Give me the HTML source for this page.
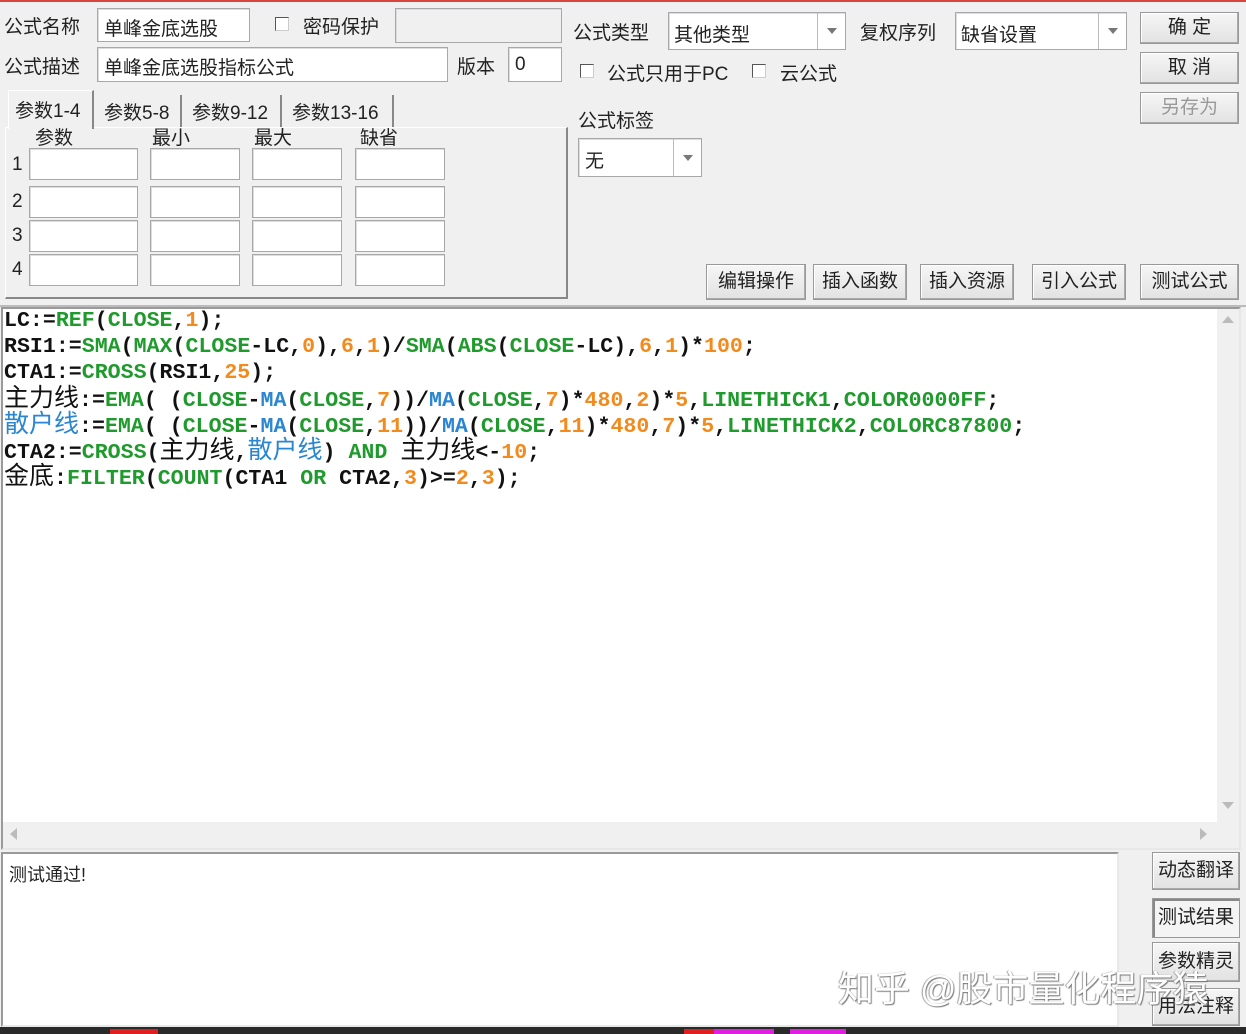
<!DOCTYPE html>
<html><head><meta charset="utf-8"><style>
*{box-sizing:border-box;margin:0;padding:0}
body{width:1246px;height:1034px;background:#f0f0f0;position:relative;overflow:hidden;font-family:"Liberation Sans","Noto Sans CJK SC",sans-serif;font-size:19px;color:#222}
.a{position:absolute;white-space:nowrap}
.in{position:absolute;background:#fff;border:1px solid #a8a8a8;box-shadow:inset 1px 1px 0 #ddd}
.cb{position:absolute;width:14px;height:14px;border:1px solid #555;background:#fff;border-right-color:#ccc;border-bottom-color:#ccc}
.btn{position:absolute;border:1px solid #999;background:linear-gradient(#f6f6f6,#e2e2e2);box-shadow:inset -1px -1px 0 #aaa,inset 1px 1px 0 #fff;text-align:center;font-size:19px;color:#222}
.arr{position:absolute;top:0;bottom:0;border-left:1px solid #bbb;width:28px;right:0}
.arr:after{content:"";position:absolute;left:9px;top:50%;margin-top:-3px;border:5px solid transparent;border-top:6px solid #777}
.code{position:absolute;left:4px;top:308px;font-family:"Liberation Mono",monospace;font-weight:bold;font-size:21.6px;color:#111;white-space:pre}
.code div{height:26px;line-height:26px;overflow:visible}
.g{color:#1f9a2c}.o{color:#f38a1c}.b{color:#2a86d0}
.cj{font-family:"Noto Sans CJK SC",sans-serif;font-weight:normal;font-size:25px;line-height:20px}
</style></head><body>
<div class="a" style="left:0;top:0;width:1246px;height:2px;background:#d9443c"></div>

<div class="a" style="left:4px;top:12px">公式名称</div>
<div class="in" style="left:97px;top:8px;width:153px;height:34px"><span class="a" style="left:6px;top:5px">单峰金底选股</span></div>
<div class="cb" style="left:275px;top:17px"></div>
<div class="a" style="left:303px;top:12px">密码保护</div>
<div class="in" style="left:395px;top:8px;width:167px;height:35px;background:#f0f0f0"></div>

<div class="a" style="left:4px;top:52px">公式描述</div>
<div class="in" style="left:97px;top:47px;width:351px;height:35px"><span class="a" style="left:6px;top:5px">单峰金底选股指标公式</span></div>
<div class="a" style="left:457px;top:52px">版本</div>
<div class="in" style="left:508px;top:47px;width:54px;height:35px"><span class="a" style="left:6px;top:6px">0</span></div>

<!-- tabs -->
<div class="a" style="left:5px;top:127px;width:563px;height:172px;border:1px solid #fff;border-right:2px solid #888;border-bottom:2px solid #888"></div>
<div class="a" style="left:8px;top:90px;width:86px;height:39px;background:#f0f0f0;border-right:2px solid #888;border-top:1px solid #fff;border-left:1px solid #fff"><span class="a" style="left:6px;top:5px">参数1-4</span></div>
<div class="a" style="left:96px;top:95px;width:86px;height:32px;border-right:2px solid #888"><span class="a" style="left:8px;top:3px">参数5-8</span></div>
<div class="a" style="left:184px;top:95px;width:98px;height:32px;border-right:2px solid #888"><span class="a" style="left:8px;top:3px">参数9-12</span></div>
<div class="a" style="left:284px;top:95px;width:110px;height:32px;border-right:2px solid #888"><span class="a" style="left:8px;top:3px">参数13-16</span></div>
<div class="a" style="left:35px;top:123px">参数</div>
<div class="a" style="left:152px;top:123px">最小</div>
<div class="a" style="left:254px;top:123px">最大</div>
<div class="a" style="left:360px;top:123px">缺省</div>
<div class="a" style="left:12px;top:154px">1</div><div class="a" style="left:12px;top:191px">2</div><div class="a" style="left:12px;top:225px">3</div><div class="a" style="left:12px;top:259px">4</div>
<div class="in" style="left:29px;top:148px;width:109px;height:32px"></div><div class="in" style="left:150px;top:148px;width:90px;height:32px"></div><div class="in" style="left:252px;top:148px;width:90px;height:32px"></div><div class="in" style="left:355px;top:148px;width:90px;height:32px"></div>
<div class="in" style="left:29px;top:186px;width:109px;height:32px"></div><div class="in" style="left:150px;top:186px;width:90px;height:32px"></div><div class="in" style="left:252px;top:186px;width:90px;height:32px"></div><div class="in" style="left:355px;top:186px;width:90px;height:32px"></div>
<div class="in" style="left:29px;top:220px;width:109px;height:32px"></div><div class="in" style="left:150px;top:220px;width:90px;height:32px"></div><div class="in" style="left:252px;top:220px;width:90px;height:32px"></div><div class="in" style="left:355px;top:220px;width:90px;height:32px"></div>
<div class="in" style="left:29px;top:254px;width:109px;height:32px"></div><div class="in" style="left:150px;top:254px;width:90px;height:32px"></div><div class="in" style="left:252px;top:254px;width:90px;height:32px"></div><div class="in" style="left:355px;top:254px;width:90px;height:32px"></div>

<!-- right -->
<div class="a" style="left:573px;top:18px">公式类型</div>
<div class="in" style="left:668px;top:12px;width:178px;height:38px"><span class="a" style="left:5px;top:7px">其他类型</span><div class="arr"></div></div>
<div class="a" style="left:860px;top:18px">复权序列</div>
<div class="in" style="left:955px;top:12px;width:172px;height:38px"><span class="a" style="left:5px;top:7px">缺省设置</span><div class="arr"></div></div>
<div class="btn" style="left:1140px;top:12px;width:99px;height:32px;line-height:30px">确 定</div>
<div class="btn" style="left:1140px;top:52px;width:99px;height:32px;line-height:30px">取 消</div>
<div class="btn" style="left:1140px;top:92px;width:99px;height:32px;line-height:30px;color:#999">另存为</div>
<div class="cb" style="left:580px;top:64px"></div>
<div class="a" style="left:607px;top:59px">公式只用于PC</div>
<div class="cb" style="left:752px;top:64px"></div>
<div class="a" style="left:780px;top:59px">云公式</div>
<div class="a" style="left:578px;top:106px">公式标签</div>
<div class="in" style="left:578px;top:138px;width:124px;height:39px"><span class="a" style="left:6px;top:7px">无</span><div class="arr"></div></div>

<div class="btn" style="left:706px;top:264px;width:100px;height:36px;line-height:34px">编辑操作</div>
<div class="btn" style="left:813px;top:264px;width:94px;height:36px;line-height:34px">插入函数</div>
<div class="btn" style="left:920px;top:264px;width:94px;height:36px;line-height:34px">插入资源</div>
<div class="btn" style="left:1032px;top:264px;width:94px;height:36px;line-height:34px">引入公式</div>
<div class="btn" style="left:1140px;top:264px;width:99px;height:36px;line-height:34px">测试公式</div>

<!-- editor -->
<div class="a" style="left:0;top:305px;width:1246px;height:2px;background:#bbb"></div>
<div class="a" style="left:1px;top:307px;width:1240px;height:543px;background:#fff;border:2px solid #9a9a9a;border-right-color:#e8e8e8;border-bottom-color:#e8e8e8"></div>
<div class="a" style="left:1217px;top:309px;width:22px;height:513px;background:#f0f0f0"></div>
<div class="a" style="left:1222px;top:316px;border:6px solid transparent;border-bottom:7px solid #bbb;border-top:0"></div>
<div class="a" style="left:1222px;top:802px;border:6px solid transparent;border-top:7px solid #bbb;border-bottom:0"></div>
<div class="a" style="left:3px;top:822px;width:1236px;height:26px;background:#f0f0f0"></div>
<div class="a" style="left:10px;top:828px;border:6px solid transparent;border-right:7px solid #bbb;border-left:0"></div>
<div class="a" style="left:1200px;top:828px;border:6px solid transparent;border-left:7px solid #bbb;border-right:0"></div>
<div class="code"><div>LC:=<span class="g">REF</span>(<span class="g">CLOSE</span>,<span class="o">1</span>);</div><div>RSI1:=<span class="g">SMA</span>(<span class="g">MAX</span>(<span class="g">CLOSE</span>-LC,<span class="o">0</span>),<span class="o">6</span>,<span class="o">1</span>)/<span class="g">SMA</span>(<span class="g">ABS</span>(<span class="g">CLOSE</span>-LC),<span class="o">6</span>,<span class="o">1</span>)*<span class="o">100</span>;</div><div>CTA1:=<span class="g">CROSS</span>(RSI1,<span class="o">25</span>);</div><div><span class="cj">主力线</span>:=<span class="g">EMA</span>( (<span class="g">CLOSE</span>-<span class="b">MA</span>(<span class="g">CLOSE</span>,<span class="o">7</span>))/<span class="b">MA</span>(<span class="g">CLOSE</span>,<span class="o">7</span>)*<span class="o">480</span>,<span class="o">2</span>)*<span class="o">5</span>,<span class="g">LINETHICK1</span>,<span class="g">COLOR0000FF</span>;</div><div><span class="cj b">散户线</span>:=<span class="g">EMA</span>( (<span class="g">CLOSE</span>-<span class="b">MA</span>(<span class="g">CLOSE</span>,<span class="o">11</span>))/<span class="b">MA</span>(<span class="g">CLOSE</span>,<span class="o">11</span>)*<span class="o">480</span>,<span class="o">7</span>)*<span class="o">5</span>,<span class="g">LINETHICK2</span>,<span class="g">COLORC87800</span>;</div><div>CTA2:=<span class="g">CROSS</span>(<span class="cj">主力线</span>,<span class="cj b">散户线</span>) <span class="g">AND</span> <span class="cj">主力线</span>&lt;-<span class="o">10</span>;</div><div><span class="cj">金底</span>:<span class="g">FILTER</span>(<span class="g">COUNT</span>(CTA1 <span class="g">OR</span> CTA2,<span class="o">3</span>)&gt;=<span class="o">2</span>,<span class="o">3</span>);</div></div>

<!-- output -->
<div class="a" style="left:1px;top:852px;width:1118px;height:175px;background:#fff;border:2px solid #9a9a9a;border-right-color:#e8e8e8;border-bottom-color:#e8e8e8"><span class="a" style="left:6px;top:7px;font-size:18px">测试通过!</span></div>
<div class="btn" style="left:1152px;top:852px;width:88px;height:38px;line-height:36px">动态翻译</div>
<div class="btn" style="left:1152px;top:898px;width:88px;height:40px;line-height:38px;background:#f4f4f4;box-shadow:inset 2px 2px 0 #888">测试结果</div>
<div class="btn" style="left:1152px;top:942px;width:88px;height:40px;line-height:38px">参数精灵</div>
<div class="btn" style="left:1152px;top:988px;width:88px;height:38px;line-height:36px">用法注释</div>
<div class="a" style="left:838px;top:960px;font-size:36px;color:#fff;text-shadow:1px 1px 1px #777,-1px 0 1px #999">知乎 @股市量化程序猿</div>

<div class="a" style="left:0;top:1027px;width:1246px;height:7px;background:#2a2a2a"></div>
<div class="a" style="left:110px;top:1029px;width:48px;height:5px;background:#e02020"></div>
<div class="a" style="left:684px;top:1029px;width:30px;height:5px;background:#e02020"></div>
<div class="a" style="left:714px;top:1029px;width:60px;height:5px;background:#e020e0"></div>
<div class="a" style="left:790px;top:1029px;width:56px;height:5px;background:#e020e0"></div>
</body></html>
